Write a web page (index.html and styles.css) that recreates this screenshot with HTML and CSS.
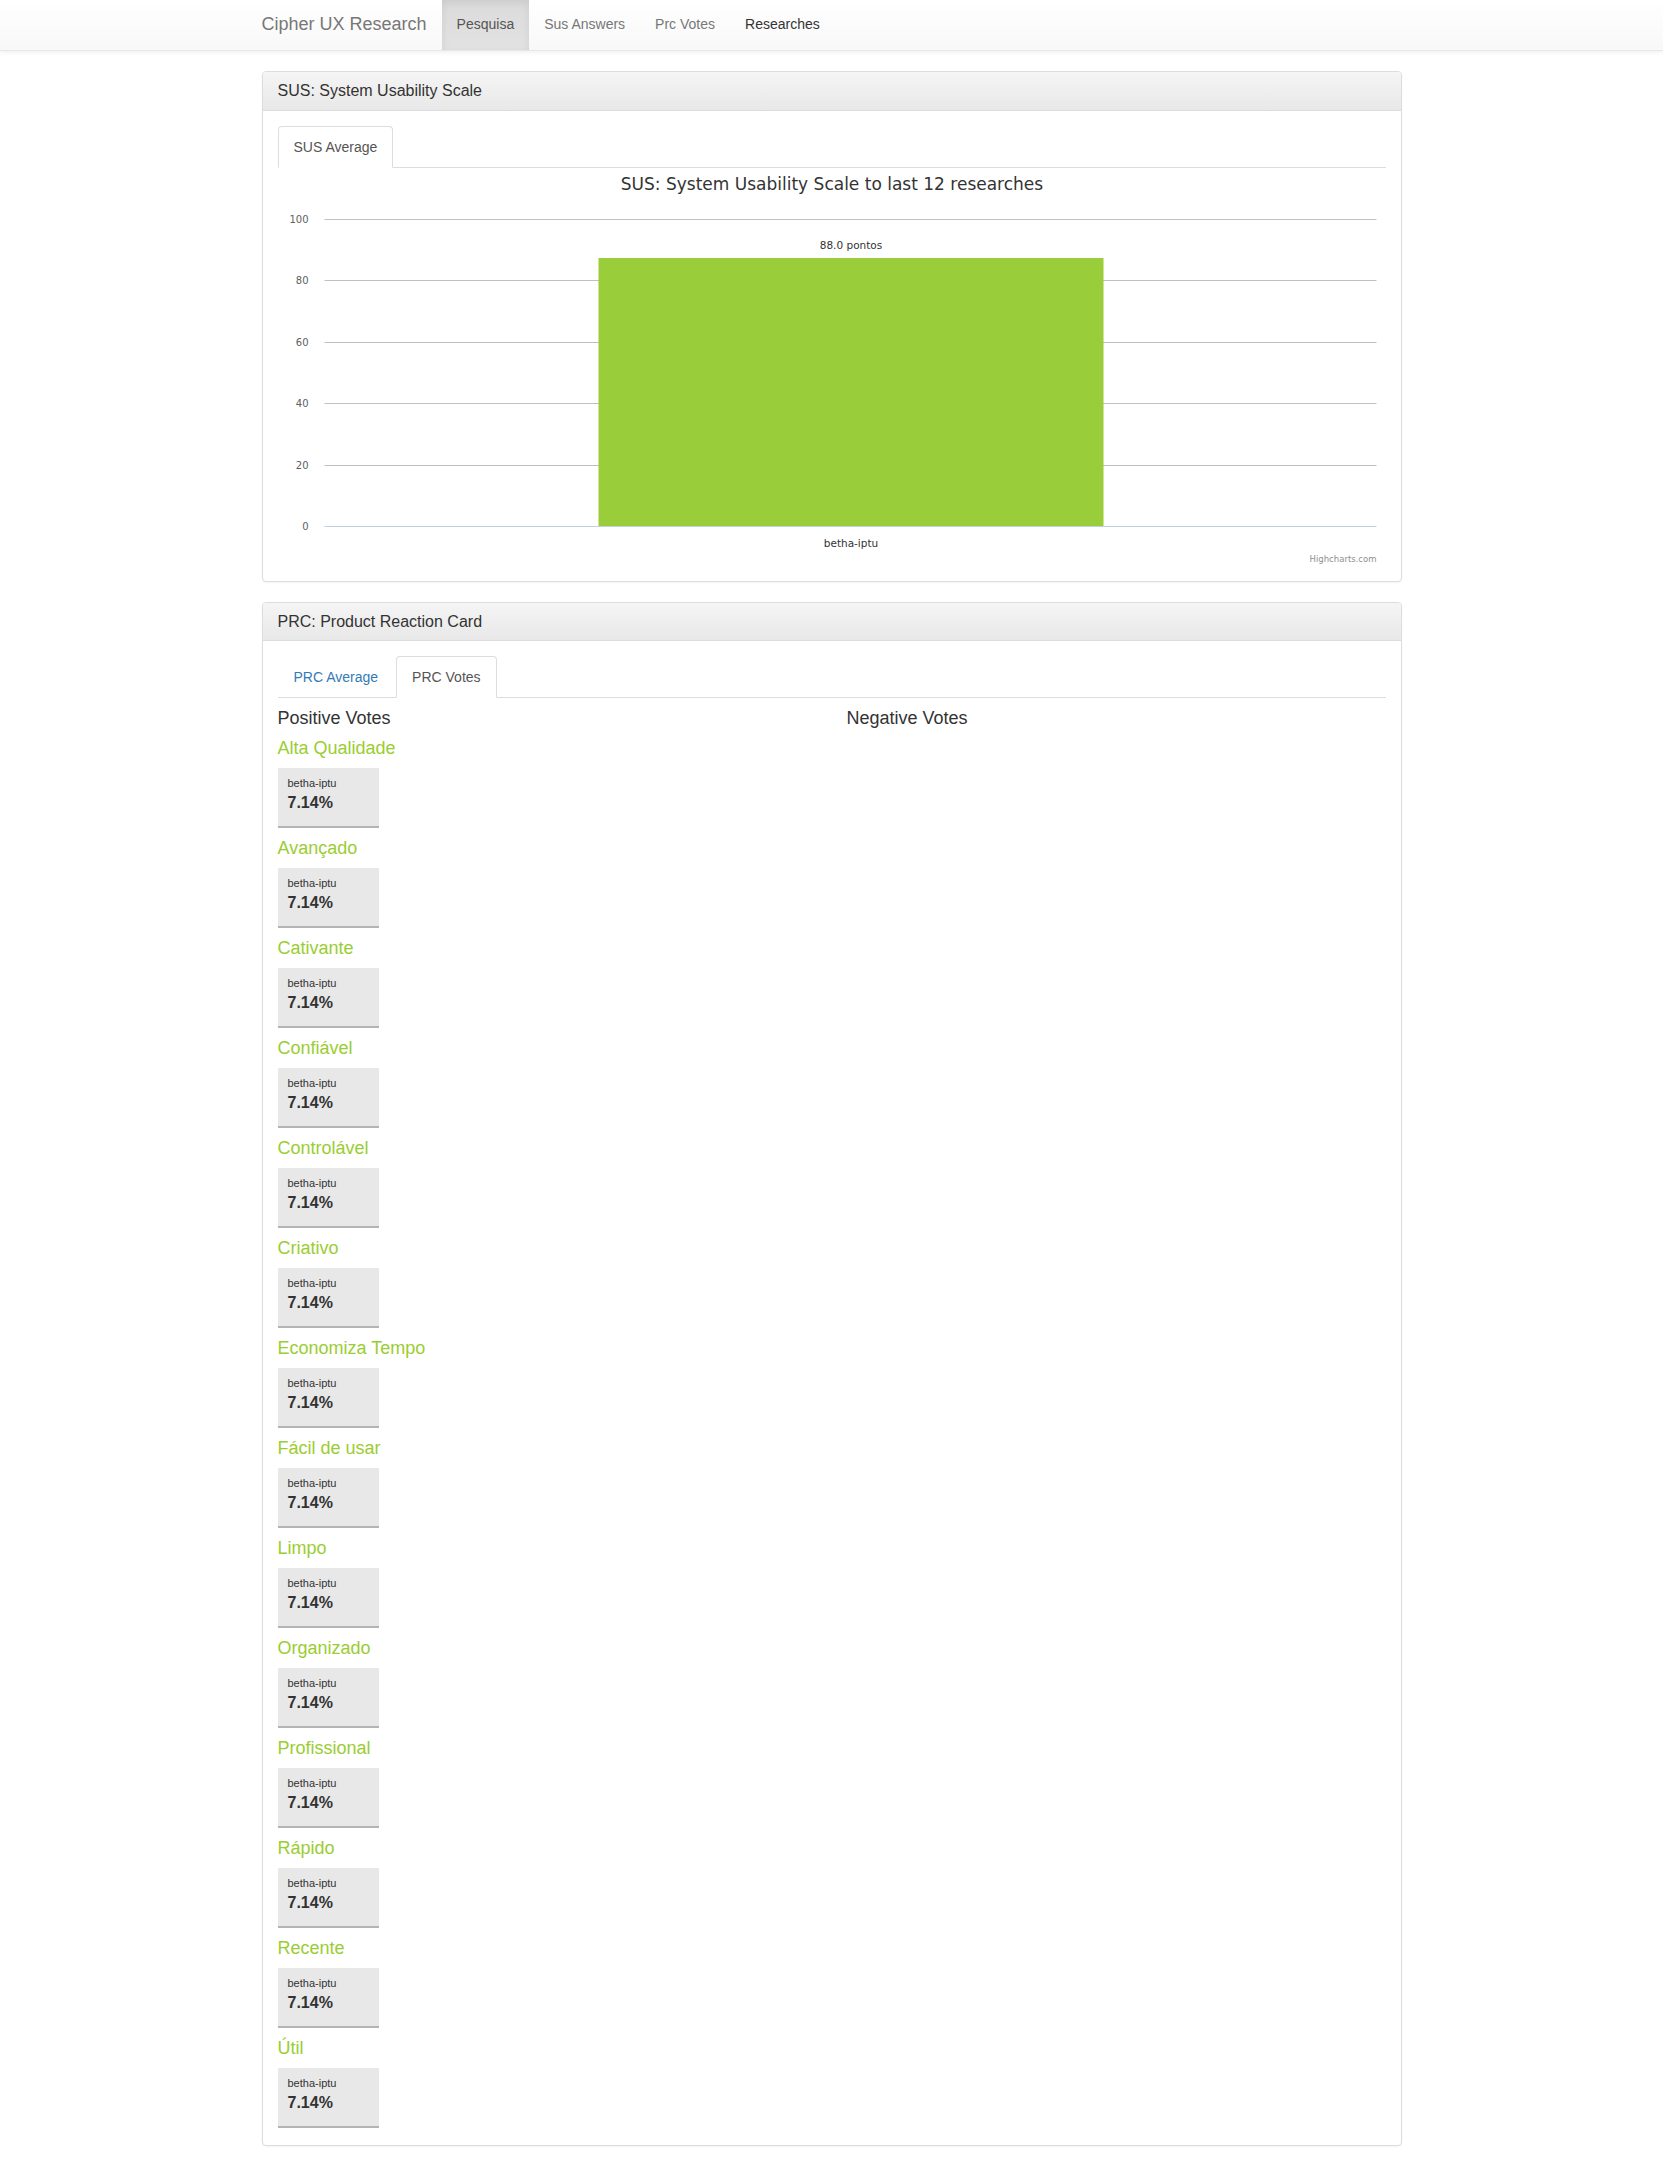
FILE: index.html
```html
<!DOCTYPE html>
<html lang="pt">
<head>
<meta charset="utf-8">
<title>Cipher UX Research</title>
<link rel="stylesheet" href="styles.css">
</head>
<body>
<nav class="navbar">
  <div class="nav-inner">
    <a class="brand" href="#">Cipher UX Research</a>
    <ul class="nav-links">
      <li class="active"><a href="#">Pesquisa</a></li>
      <li><a href="#">Sus Answers</a></li>
      <li><a href="#">Prc Votes</a></li>
      <li class="dark"><a href="#">Researches</a></li>
    </ul>
  </div>
</nav>

<main class="container">
  <section class="panel">
    <div class="panel-heading"><h3 class="panel-title">SUS: System Usability Scale</h3></div>
    <div class="panel-body">
      <ul class="tabs">
        <li class="active"><a href="#">SUS Average</a></li>
      </ul>
      <div class="chart">
        <svg width="1108" height="398" viewBox="0 0 1108 398" xmlns="http://www.w3.org/2000/svg">
          <text class="c-title" x="554" y="21.5" text-anchor="middle">SUS: System Usability Scale to last 12 researches</text>
          <g class="grid">
            <line x1="46.5" y1="51.5" x2="1098.5" y2="51.5"/>
            <line x1="46.5" y1="112.5" x2="1098.5" y2="112.5"/>
            <line x1="46.5" y1="174.5" x2="1098.5" y2="174.5"/>
            <line x1="46.5" y1="235.5" x2="1098.5" y2="235.5"/>
            <line x1="46.5" y1="297.5" x2="1098.5" y2="297.5"/>
          </g>
          <rect x="320.5" y="90" width="505" height="268.5" fill="#9acd3a"/>
          <line class="xaxis" x1="46.5" y1="358.5" x2="1098.5" y2="358.5"/>
          <g class="ylab" text-anchor="end">
            <text x="30.5" y="55">100</text>
            <text x="30.5" y="116">80</text>
            <text x="30.5" y="178">60</text>
            <text x="30.5" y="239">40</text>
            <text x="30.5" y="301">20</text>
            <text x="30.5" y="362">0</text>
          </g>
          <text class="dlab" x="573" y="80.5" text-anchor="middle">88.0 pontos</text>
          <text class="xlab" x="573" y="378.5" text-anchor="middle">betha-iptu</text>
          <text class="credits" x="1098.5" y="393.5" text-anchor="end">Highcharts.com</text>
        </svg>
      </div>
    </div>
  </section>

  <section class="panel">
    <div class="panel-heading"><h3 class="panel-title">PRC: Product Reaction Card</h3></div>
    <div class="panel-body panel-body-prc">
      <ul class="tabs">
        <li><a href="#" class="link">PRC Average</a></li>
        <li class="active"><a href="#">PRC Votes</a></li>
      </ul>
      <div class="votes">
        <div class="vote-col">
          <h4 class="col-title">Positive Votes</h4>
          <h4 class="word">Alta Qualidade</h4>
          <div class="card"><div class="card-name">betha-iptu</div><div class="card-val">7.14%</div></div>
          <h4 class="word">Avançado</h4>
          <div class="card"><div class="card-name">betha-iptu</div><div class="card-val">7.14%</div></div>
          <h4 class="word">Cativante</h4>
          <div class="card"><div class="card-name">betha-iptu</div><div class="card-val">7.14%</div></div>
          <h4 class="word">Confiável</h4>
          <div class="card"><div class="card-name">betha-iptu</div><div class="card-val">7.14%</div></div>
          <h4 class="word">Controlável</h4>
          <div class="card"><div class="card-name">betha-iptu</div><div class="card-val">7.14%</div></div>
          <h4 class="word">Criativo</h4>
          <div class="card"><div class="card-name">betha-iptu</div><div class="card-val">7.14%</div></div>
          <h4 class="word">Economiza Tempo</h4>
          <div class="card"><div class="card-name">betha-iptu</div><div class="card-val">7.14%</div></div>
          <h4 class="word">Fácil de usar</h4>
          <div class="card"><div class="card-name">betha-iptu</div><div class="card-val">7.14%</div></div>
          <h4 class="word">Limpo</h4>
          <div class="card"><div class="card-name">betha-iptu</div><div class="card-val">7.14%</div></div>
          <h4 class="word">Organizado</h4>
          <div class="card"><div class="card-name">betha-iptu</div><div class="card-val">7.14%</div></div>
          <h4 class="word">Profissional</h4>
          <div class="card"><div class="card-name">betha-iptu</div><div class="card-val">7.14%</div></div>
          <h4 class="word">Rápido</h4>
          <div class="card"><div class="card-name">betha-iptu</div><div class="card-val">7.14%</div></div>
          <h4 class="word">Recente</h4>
          <div class="card"><div class="card-name">betha-iptu</div><div class="card-val">7.14%</div></div>
          <h4 class="word">Útil</h4>
          <div class="card"><div class="card-name">betha-iptu</div><div class="card-val">7.14%</div></div>
        </div>
        <div class="vote-col">
          <h4 class="col-title">Negative Votes</h4>
        </div>
      </div>
    </div>
  </section>
</main>
</body>
</html>
```

FILE: styles.css
```css
* { box-sizing: border-box; }

html, body {
  margin: 0;
  padding: 0;
  background: #fff;
  font-family: "Liberation Sans", Arial, Helvetica, sans-serif;
  font-size: 14px;
  line-height: 1.42857;
  color: #333;
}

a { text-decoration: none; }

/* navbar */
.navbar {
  height: 51px;
  background-image: linear-gradient(to bottom, #fff 0%, #f8f8f8 100%);
  border-bottom: 1px solid #e7e7e7;
  box-shadow: inset 0 1px 0 rgba(255,255,255,.15), 0 1px 5px rgba(0,0,0,.075);
  margin-bottom: 20px;
}
.nav-inner {
  width: 1170px;
  margin: 0 auto;
  padding: 0 15px;
  display: flex;
  height: 50px;
  align-items: stretch;
}
.brand {
  display: flex;
  align-items: center;
  margin-left: -15px;
  padding: 0 15px;
  font-size: 18px;
  color: #777;
}
.nav-links {
  list-style: none;
  margin: 0;
  padding: 0;
  display: flex;
}
.nav-links li { display: flex; }
.nav-links a {
  display: flex;
  align-items: center;
  padding: 0 15px;
  font-size: 14px;
  color: #777;
}
.nav-links li.active a {
  color: #555;
  background-image: linear-gradient(to bottom, #dbdbdb 0%, #e2e2e2 100%);
  box-shadow: inset 0 3px 9px rgba(0,0,0,.075);
}
.nav-links li.dark a { color: #333; }

/* container and panels */
.container {
  width: 1140px;
  margin: 0 auto;
}
.panel {
  border: 1px solid #ddd;
  border-radius: 4px;
  background: #fff;
  box-shadow: 0 1px 2px rgba(0,0,0,.05);
  margin-bottom: 20px;
}
.panel-heading {
  padding: 10px 15px;
  background-image: linear-gradient(to bottom, #f5f5f5 0%, #e8e8e8 100%);
  border-bottom: 1px solid #ddd;
  border-radius: 3px 3px 0 0;
}
.panel-title {
  margin: 0;
  font-size: 16px;
  font-weight: 500;
  line-height: 1.1;
  color: #333;
}
.panel-body {
  padding: 15px;
}
.panel-body-prc { padding-bottom: 17px; }

/* tabs */
.tabs {
  list-style: none;
  margin: 0;
  padding: 0;
  display: flex;
  border-bottom: 1px solid #ddd;
}
.tabs li {
  margin-bottom: -1px;
  margin-right: 2px;
}
.tabs a {
  display: block;
  padding: 10px 15px;
  line-height: 20px;
  font-size: 14px;
  border: 1px solid transparent;
  border-radius: 4px 4px 0 0;
}
.tabs a.link { color: #337ab7; }
.tabs li.active a {
  color: #555;
  background: #fff;
  border-color: #ddd #ddd transparent #ddd;
}

/* chart */
.chart { height: 398px; }
.chart svg { display: block; }
.c-title {
  font-family: "DejaVu Sans", Verdana, sans-serif;
  font-size: 17px;
  fill: #333;
}
.grid line { stroke: #c0c0c0; stroke-width: 1; }
.xaxis { stroke: #c0d0e0; stroke-width: 1; }
.ylab text {
  font-family: "DejaVu Sans", Verdana, sans-serif;
  font-size: 10px;
  fill: #606060;
}
.dlab, .xlab {
  font-family: "DejaVu Sans", Verdana, sans-serif;
  font-size: 10.5px;
  fill: #333;
}
.credits {
  font-family: "DejaVu Sans", Verdana, sans-serif;
  font-size: 8.5px;
  fill: #909090;
}

/* votes */
.votes {
  display: grid;
  grid-template-columns: 1fr 1fr;
  column-gap: 30px;
}
.vote-col { display: block; }
h4 {
  margin: 10px 0;
  font-size: 18px;
  font-weight: 500;
  line-height: 20px;
}
.col-title { color: #333; }
.word { color: #9acd32; }
.card {
  width: 101px;
  height: 60px;
  padding: 9px 10px 0 10px;
  background: #e8e8e8;
  border-bottom: 2px solid #b4b4b4;
}
.card-name {
  font-size: 11px;
  line-height: 12px;
  color: #333;
}
.card-val {
  margin-top: 4px;
  font-size: 16px;
  line-height: 20px;
  font-weight: bold;
  color: #333;
}
```
